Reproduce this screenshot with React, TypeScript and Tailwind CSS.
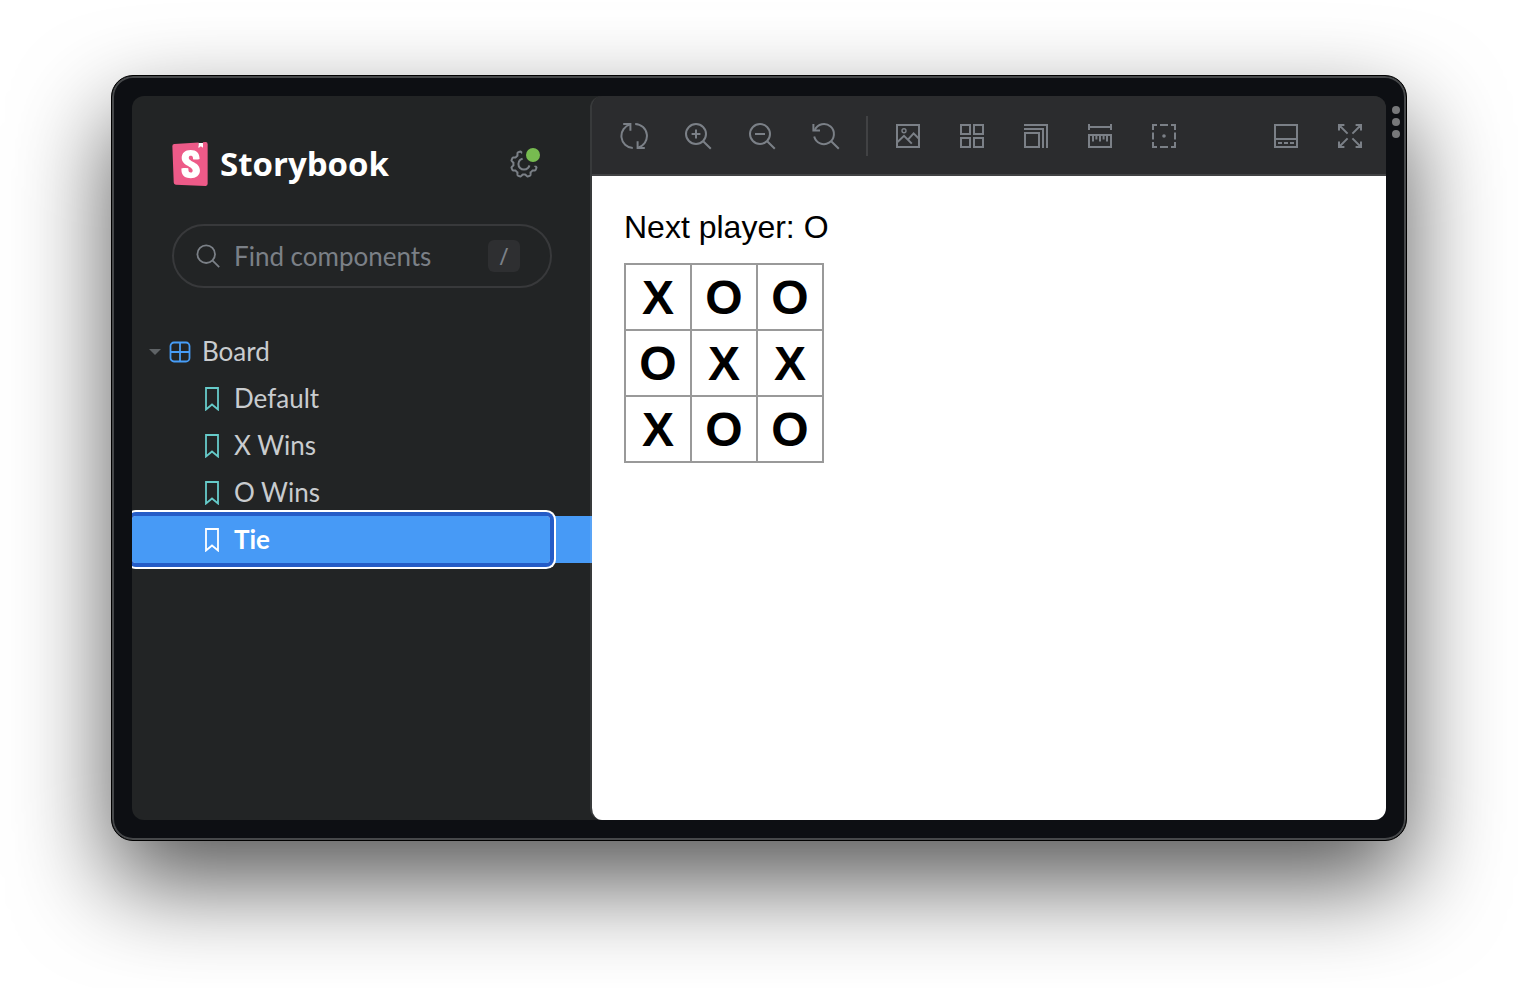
import React, { useState } from "react";

type IconProps = { children: React.ReactNode };

function Icon({ children }: IconProps) {
  return (
    <svg viewBox="0 0 14 14" className="size-7 shrink-0" fill="none" stroke="currentColor" aria-hidden="true">
      {children}
    </svg>
  );
}

const syncIcon = (
  <Icon>
    <path d="M5.2 1.2A6 6 0 0 0 6.4 13M7.6 1A6 6 0 0 1 9 12.8" />
    <path d="M1.6 1H5.2V4.4M12.4 13H8.8V9.6" />
  </Icon>
);
const zoomInIcon = (
  <Icon>
    <circle cx="6" cy="6" r="5" />
    <path d="M9.6 9.6L13.4 13.4M6 3.8V8.2M3.8 6H8.2" />
  </Icon>
);
const zoomOutIcon = (
  <Icon>
    <circle cx="6" cy="6" r="5" />
    <path d="M9.6 9.6L13.4 13.4M3.5 6H8.5" />
  </Icon>
);
const zoomResetIcon = (
  <Icon>
    <path d="M1.4 4A5 5 0 1 1 1.1 7.2" />
    <path d="M.7 1V4.3H4M9.6 9.6L13.4 13.4" />
  </Icon>
);
const photoIcon = (
  <Icon>
    <rect x="1.5" y="1.5" width="11" height="11" />
    <circle cx="5" cy="4.4" r="1" strokeWidth=".7" />
    <path d="M1.5 10.2L5 6.9L8.9 10.8M7.1 8.7L9.8 5.7L12.5 8.4" />
  </Icon>
);
const gridIcon = (
  <Icon>
    <rect x="1.5" y="1.5" width="4.5" height="4.5" />
    <rect x="8" y="1.5" width="4.5" height="4.5" />
    <rect x="1.5" y="8" width="4.5" height="4.5" />
    <rect x="8" y="8" width="4.5" height="4.5" />
  </Icon>
);
const viewportIcon = (
  <Icon>
    <path d="M1 1.5H12.5V13M1 3.5H10.5V13" />
    <rect x="1.5" y="5.5" width="7" height="7" />
  </Icon>
);
const rulerIcon = (
  <Icon>
    <path d="M1.5 1V4M12.5 1V4M1.5 2.5H12.5" />
    <rect x="1.5" y="6.5" width="11" height="6" />
    <path d="M3.5 6.5V9.7M7 6.5V9.7M10.5 6.5V9.7" />
    <path d="M5.2 6.5V8.7M8.8 6.5V8.7" />
  </Icon>
);
const outlineIcon = (
  <Icon>
    <path d="M1.5 4V1.5H3.5M5 1.5H9M10.5 1.5H12.5V4M12.5 5.2V8.8M12.5 10V12.5H10.5M9 12.5H5M3.5 12.5H1.5V10M1.5 8.8V5.2" />
    <circle cx="7" cy="7" r=".9" fill="currentColor" stroke="none" />
  </Icon>
);
const bottomBarIcon = (
  <Icon>
    <rect x="1.5" y="1.5" width="11" height="11" />
    <path d="M1.5 8.5H12.5M3 10.5H5M6 10.5H8M9 10.5H11" />
  </Icon>
);
const expandIcon = (
  <Icon>
    <path d="M1.5 4.2V1.5H4.2M1.5 1.5L5.8 5.8M9.8 1.5H12.5V4.2M12.5 1.5L8.2 5.8M1.5 9.8V12.5H4.2M1.5 12.5L5.8 8.2M12.5 9.8V12.5H9.8M12.5 12.5L8.2 8.2" />
  </Icon>
);

type Tool = { label: string; icon: React.ReactNode };

const zoomTools: Tool[] = [
  { label: "Remount component", icon: syncIcon },
  { label: "Zoom in", icon: zoomInIcon },
  { label: "Zoom out", icon: zoomOutIcon },
  { label: "Reset zoom", icon: zoomResetIcon },
];
const canvasTools: Tool[] = [
  { label: "Change background", icon: photoIcon },
  { label: "Apply grid", icon: gridIcon },
  { label: "Change viewport", icon: viewportIcon },
  { label: "Enable measure", icon: rulerIcon },
  { label: "Apply outlines", icon: outlineIcon },
];
const layoutTools: Tool[] = [
  { label: "Show addons", icon: bottomBarIcon },
  { label: "Go full screen", icon: expandIcon },
];

function ToolGroup({ tools }: { tools: Tool[] }) {
  return (
    <div className="flex gap-2">
      {tools.map((tool) => (
        <button key={tool.label} type="button" aria-label={tool.label} className="flex h-14 w-14 items-center justify-center text-[#7b8087]">
          {tool.icon}
        </button>
      ))}
    </div>
  );
}

function StorybookLogo() {
  return (
    <svg viewBox="2.3 0 19.4 24" className="h-11 w-9 shrink-0" aria-hidden="true">
      <path fill="#fff" d="M5 2H16.5V.5H19.2V2H20V22H5Z" />
      <path
        fill="#ed5a88"
        d="M16.71.243l-.12 2.71a.18.18 0 00.29.15l1.06-.8.9.7a.18.18 0 00.28-.14l-.1-2.76 1.33-.1a1.2 1.2 0 011.279 1.2v21.596a1.2 1.2 0 01-1.26 1.2l-16.096-.72a1.2 1.2 0 01-1.15-1.16l-.75-19.797a1.2 1.2 0 011.13-1.27L16.7.222zM13.64 9.3c0 .47 3.16.24 3.59-.08 0-3.2-1.72-4.89-4.859-4.89-3.15 0-4.899 1.72-4.899 4.29 0 4.45 5.999 4.53 5.999 6.959 0 .7-.32 1.1-1.05 1.1-.96 0-1.35-.49-1.3-2.16 0-.36-3.649-.48-3.769 0-.27 4.03 2.23 5.2 5.099 5.2 2.79 0 4.969-1.49 4.969-4.18 0-4.77-6.099-4.64-6.099-6.999 0-.97.72-1.1 1.13-1.1.45 0 1.25.07 1.19 1.87z"
      />
    </svg>
  );
}

function cogOutline() {
  const points: string[] = [];
  for (let i = 0; i < 160; i++) {
    const angle = (i / 160) * Math.PI * 2;
    const wave = Math.max(-1, Math.min(1, -1.8 * Math.cos(angle * 8)));
    const radius = 5.9 + 0.6 * wave;
    points.push(`${(7 + radius * Math.sin(angle)).toFixed(2)} ${(7 - radius * Math.cos(angle)).toFixed(2)}`);
  }
  return `M${points.join("L")}Z`;
}

function SettingsIcon() {
  return (
    <svg viewBox="0 0 14 14" className="size-7 overflow-visible" fill="none" stroke="#7b8087" aria-hidden="true">
      <mask id="badge-gap" maskUnits="userSpaceOnUse" x="-2" y="-2" width="18" height="18">
        <rect x="-2" y="-2" width="18" height="18" fill="#fff" stroke="none" />
        <circle cx="11.5" cy="2.5" r="5.5" fill="#000" stroke="none" />
      </mask>
      <g mask="url(#badge-gap)">
        <path d={cogOutline()} strokeLinejoin="round" />
        <circle cx="7" cy="7" r="2.8" />
      </g>
      <circle cx="11.5" cy="2.5" r="3.5" fill="#77bb50" stroke="none" />
    </svg>
  );
}

const stories = ["Default", "X Wins", "O Wins", "Tie"];
const squares = ["X", "O", "O", "O", "X", "X", "X", "O", "O"];

function Sidebar() {
  const [selected, setSelected] = useState("Tie");
  return (
    <aside className="w-[460px] shrink-0">
      <header className="flex items-center justify-between pt-[46px] pr-[54px] pl-10">
        <a href="#home" className="flex items-center gap-3 font-['Open_Sans'] text-[33px] leading-11 font-bold text-white">
          <StorybookLogo />
          Storybook
        </a>
        <button type="button" aria-label="Settings">
          <SettingsIcon />
        </button>
      </header>

      <label className="mt-[38px] mr-10 ml-10 flex h-16 items-center rounded-full border-2 border-[#38393b] pr-[30px] pl-5 text-[#7b8087]">
        <Icon>
          <circle cx="6.1" cy="6.1" r="4.4" strokeWidth=".9" />
          <path d="M9.2 9.2L12.6 12.6" strokeWidth=".9" />
        </Icon>
        <input
          type="text"
          aria-label="Find components"
          placeholder="Find components"
          className="ml-3 min-w-0 flex-1 bg-transparent text-[26px] leading-8 outline-none placeholder:text-[#7b8087]"
        />
        <kbd className="flex size-8 items-center justify-center rounded-md bg-[#2e2f31] font-['Open_Sans'] text-2xl">/</kbd>
      </label>

      <nav className="mt-10 text-[26px] leading-[47px] text-[#c9cccf]" aria-label="Stories">
        <button type="button" className="flex h-[47px] w-full items-center pl-4" aria-expanded="true">
          <svg viewBox="0 0 14 8" className="w-3.5" fill="#5f6366" aria-hidden="true">
            <path d="M1 1H13L7 7Z" />
          </svg>
          <svg viewBox="0 0 22 22" className="mr-[11px] ml-[7px] size-[22px]" fill="none" stroke="#479df8" strokeWidth="1.8" aria-hidden="true">
            <rect x="1.5" y="1.5" width="19" height="19" rx="3.5" />
            <path d="M11 1.5V20.5M1.5 11H20.5" />
          </svg>
          Board
        </button>
        <ul>
          {stories.map((story) => {
            const active = story === selected;
            return (
              <li key={story} className={active ? "bg-[#479af6] pr-[42px]" : "pr-[42px]"}>
                <a
                  href={`#${story}`}
                  onClick={() => setSelected(story)}
                  aria-current={active ? "page" : undefined}
                  className={
                    active
                      ? "flex h-[47px] items-center gap-3.5 rounded-sm pl-[72px] font-bold text-white shadow-[0_0_0_4px_#255cc7,0_0_0_6px_#fff]"
                      : "flex h-[47px] items-center gap-3.5 pl-[72px]"
                  }
                >
                  <svg
                    viewBox="0 0 16 24"
                    className={active ? "h-6 w-4 text-white" : "h-6 w-4 text-[#66cbca]"}
                    fill="none"
                    stroke="currentColor"
                    strokeWidth="1.8"
                    aria-hidden="true"
                  >
                    <path d="M2 1H14V22.5L8 17.5L2 22.5Z" />
                  </svg>
                  {story}
                </a>
              </li>
            );
          })}
        </ul>
      </nav>
    </aside>
  );
}

function Preview() {
  return (
    <main className="-ml-0.5 flex min-w-0 flex-1 flex-col overflow-hidden rounded-l-xl border-l-2 border-white/10">
      <div className="flex h-20 items-center border-b-2 border-[#414244] bg-[#2b2c2e] pt-0.5 pr-2 pl-3.5">
        <ToolGroup tools={zoomTools} />
        <div className="mx-3 h-10 w-0.5 bg-[#414244]" />
        <ToolGroup tools={canvasTools} />
        <div className="ml-auto">
          <ToolGroup tools={layoutTools} />
        </div>
      </div>
      <div className="flex-1 bg-white p-8 font-['Liberation_Sans',Arial,sans-serif] text-black">
        <p className="mb-4 text-[32px] leading-[39px]">Next player: O</p>
        <div className="grid w-fit grid-cols-3 border-t-2 border-l-2 border-[#999]">
          {squares.map((value, index) => (
            <button key={index} type="button" className="size-[66px] border-r-2 border-b-2 border-[#999] pt-0.5 text-center text-5xl leading-[62px] font-bold">
              {value}
            </button>
          ))}
        </div>
      </div>
    </main>
  );
}

export default function App() {
  return (
    <div className="flex min-h-screen flex-col overflow-hidden bg-white px-[111px] pt-[75px] pb-[147px] font-['Lato','Open_Sans',sans-serif]">
      <div className="relative flex flex-1 rounded-[22px] border border-black bg-[#0d0f13] p-5 shadow-[0_42px_96px_rgba(0,0,0,0.66),inset_0_0_0_2px_#46484a]">
        <div className="flex min-w-0 flex-1 overflow-hidden rounded-xl bg-[#222425]">
          <Sidebar />
          <Preview />
        </div>
        <button type="button" aria-label="Window menu" className="absolute top-[30px] right-1.5 flex flex-col gap-1">
          <span className="size-2 rounded-full bg-[#77787a]" />
          <span className="size-2 rounded-full bg-[#77787a]" />
          <span className="size-2 rounded-full bg-[#77787a]" />
        </button>
      </div>
    </div>
  );
}
